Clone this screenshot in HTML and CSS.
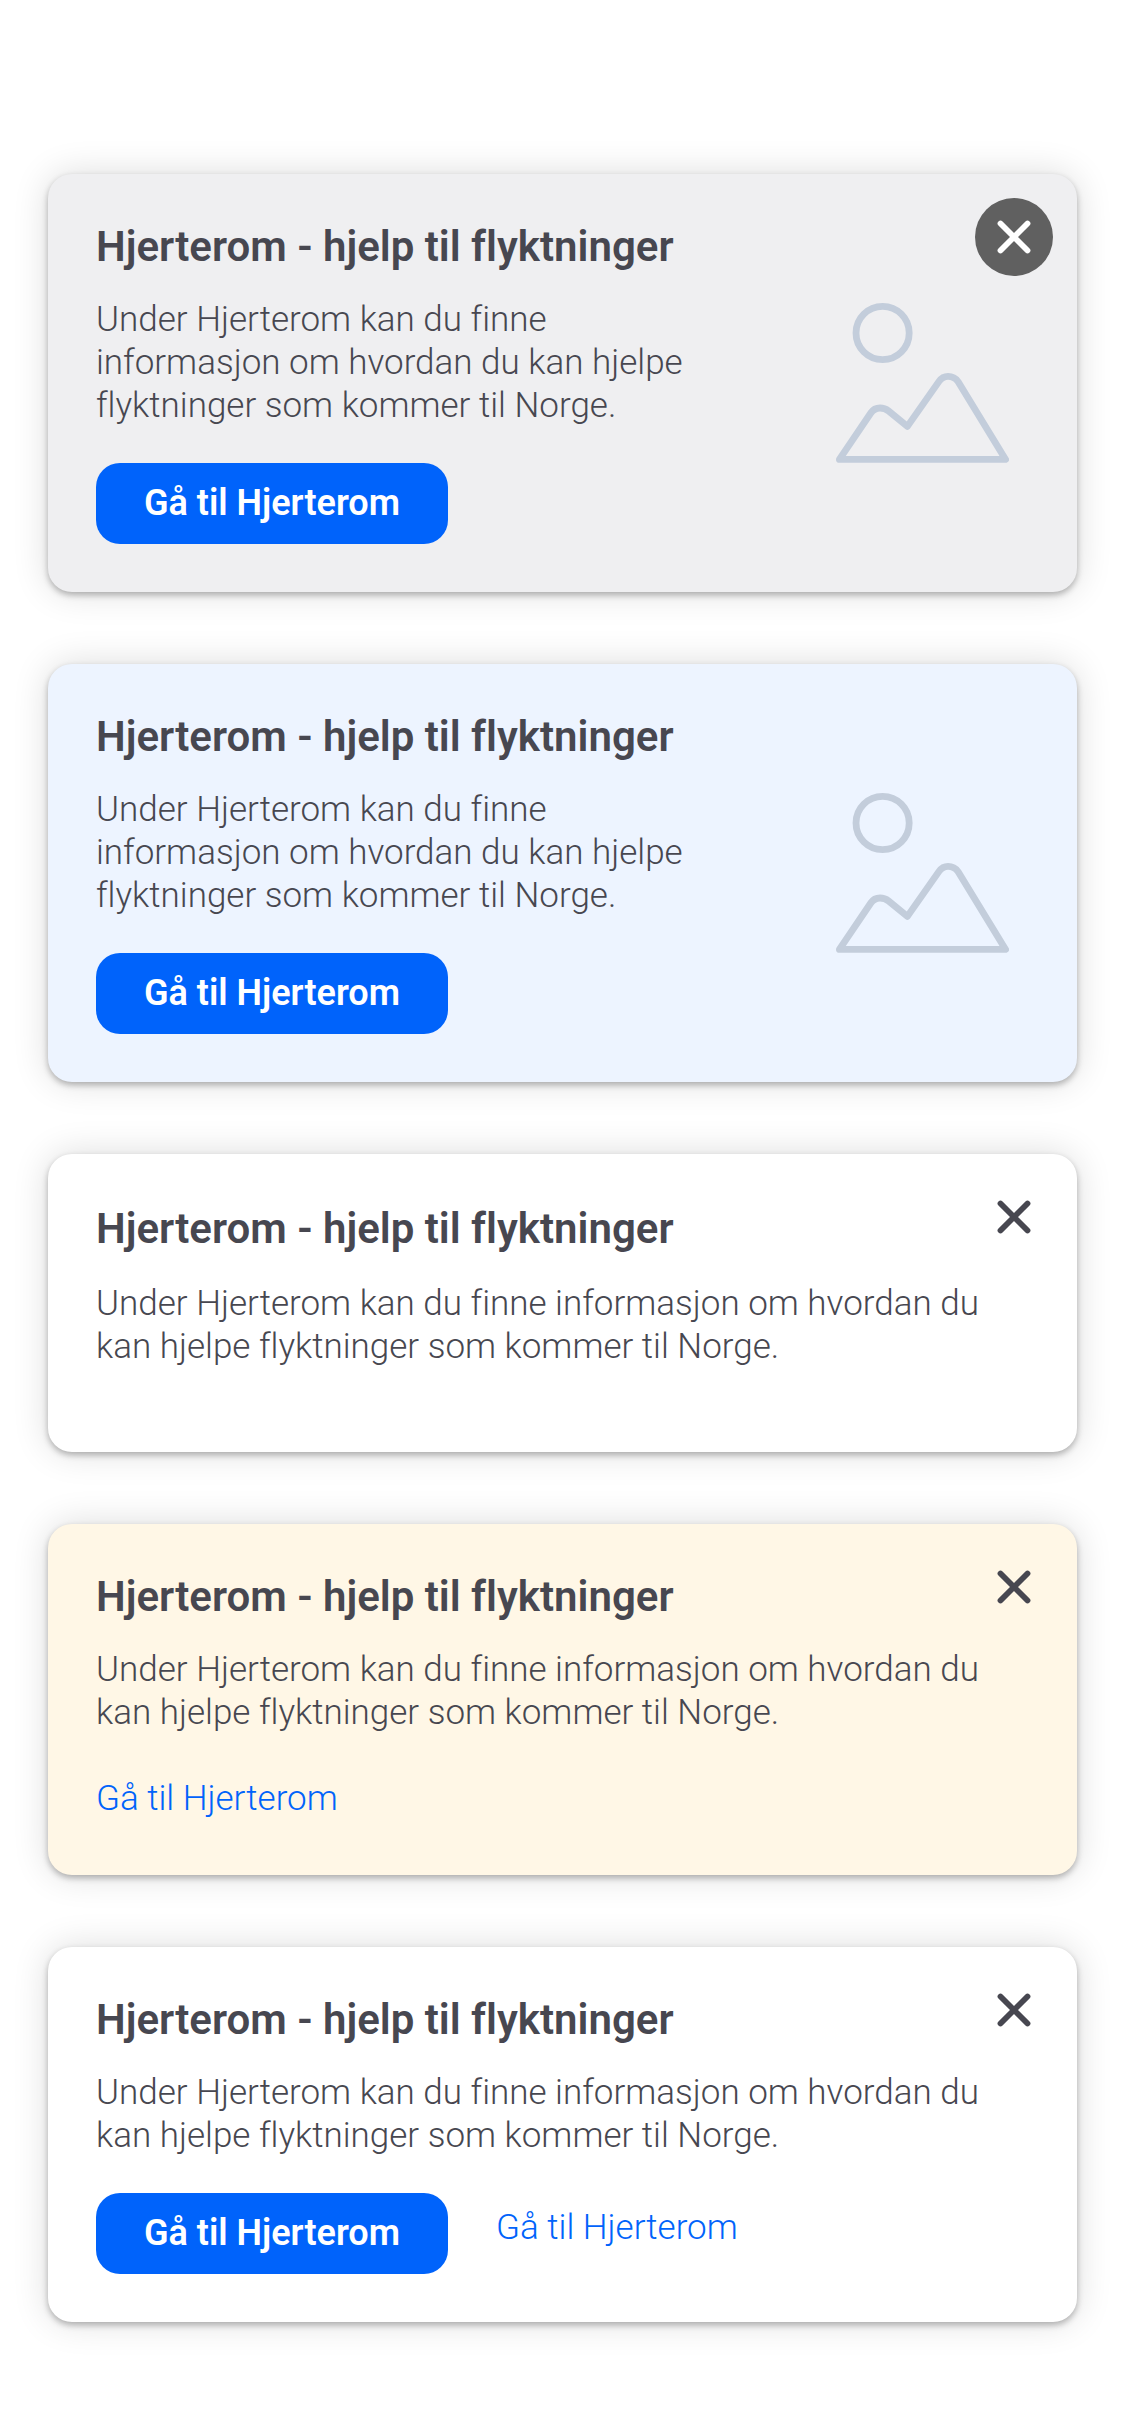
FILE: index.html
```html
<!DOCTYPE html>
<html lang="nb">
<head>
<meta charset="utf-8">
<meta name="viewport" content="width=device-width, initial-scale=1">
<title>Hjerterom</title>
<link rel="stylesheet" href="styles.css">
</head>
<body>
<svg class="sprite" aria-hidden="true">
  <symbol id="close" viewBox="0 0 34 34">
    <path d="M3.5 3.5 30.5 30.5M30.5 3.5 3.5 30.5" fill="none" stroke="currentColor" stroke-width="5.8" stroke-linecap="round"/>
  </symbol>
  <symbol id="picture" viewBox="0 0 173 160">
    <g fill="none" stroke="currentColor" stroke-width="6.8" stroke-linejoin="round">
      <circle cx="46.6" cy="30" r="26.6"/>
      <path d="M3.4 156.4 34.8 110Q38.2 105 44 105Q48.8 105 52.6 108L71.4 123.4 103 78.4Q106.6 73.4 112 73.4Q118.4 73.4 122 78.6L169.6 156.4Z"/>
    </g>
  </symbol>
</svg>
<main class="messages">
  <section class="card card-neutral">
    <div class="card-text">
      <h2 class="card-title">Hjerterom - hjelp til flyktninger</h2>
      <p class="card-body">Under Hjerterom kan du finne informasjon om hvordan du kan hjelpe flyktninger som kommer til Norge.</p>
      <div class="card-actions"><button class="button" type="button">Gå til Hjerterom</button></div>
    </div>
    <div class="card-media"><svg class="picture"><use href="#picture"/></svg></div>
    <button class="close close-filled" type="button" aria-label="Lukk"><svg class="close-icon"><use href="#close"/></svg></button>
  </section>

  <section class="card card-info">
    <div class="card-text">
      <h2 class="card-title">Hjerterom - hjelp til flyktninger</h2>
      <p class="card-body">Under Hjerterom kan du finne informasjon om hvordan du kan hjelpe flyktninger som kommer til Norge.</p>
      <div class="card-actions"><button class="button" type="button">Gå til Hjerterom</button></div>
    </div>
    <div class="card-media"><svg class="picture"><use href="#picture"/></svg></div>
  </section>

  <section class="card card-plain">
    <div class="card-text">
      <h2 class="card-title">Hjerterom - hjelp til flyktninger</h2>
      <p class="card-body">Under Hjerterom kan du finne informasjon om hvordan du kan hjelpe flyktninger som kommer til Norge.</p>
      <div class="card-actions"></div>
    </div>
    <button class="close" type="button" aria-label="Lukk"><svg class="close-icon"><use href="#close"/></svg></button>
  </section>

  <section class="card card-warning">
    <div class="card-text">
      <h2 class="card-title">Hjerterom - hjelp til flyktninger</h2>
      <p class="card-body">Under Hjerterom kan du finne informasjon om hvordan du kan hjelpe flyktninger som kommer til Norge.</p>
      <div class="card-actions"><a class="link" href="#">Gå til Hjerterom</a></div>
    </div>
    <button class="close" type="button" aria-label="Lukk"><svg class="close-icon"><use href="#close"/></svg></button>
  </section>

  <section class="card">
    <div class="card-text">
      <h2 class="card-title">Hjerterom - hjelp til flyktninger</h2>
      <p class="card-body">Under Hjerterom kan du finne informasjon om hvordan du kan hjelpe flyktninger som kommer til Norge.</p>
      <div class="card-actions"><button class="button" type="button">Gå til Hjerterom</button><a class="link" href="#">Gå til Hjerterom</a></div>
    </div>
    <button class="close" type="button" aria-label="Lukk"><svg class="close-icon"><use href="#close"/></svg></button>
  </section>
</main>
</body>
</html>
```
FILE: styles.css
```css
* {
  box-sizing: border-box;
}

body {
  margin: 0;
  background: #fff;
  color: #474750;
  font-family: Roboto, sans-serif;
  font-size: 35px;
  font-variant-ligatures: none;
  line-height: 43px;
}

.sprite {
  position: absolute;
  width: 0;
  height: 0;
}

.messages {
  display: flex;
  flex-direction: column;
  gap: 72px;
  padding: 174px 48px 114px;
}

.card {
  position: relative;
  display: flex;
  align-items: center;
  gap: 96px;
  padding: 48px;
  border-radius: 24px;
  background: #fff;
  box-shadow: 0 3px 6px rgba(0, 0, 0, 0.28), 0 0 36px rgba(0, 0, 0, 0.14);
}

.card-neutral {
  background: #efeff1;
}

.card-info {
  background: #edf4ff;
}

.card-warning {
  background: #fff7e6;
}

.card-text {
  flex: 1;
}

.card-title {
  margin: 0 0 26px;
  font-size: 42px;
  font-weight: 600;
  line-height: 50px;
}

.card-plain .card-title {
  line-height: 54px;
}

.card-body {
  margin: 0;
  font-weight: 300;
}

.card-actions {
  display: flex;
  align-items: flex-start;
  gap: 48px;
  margin-top: 36px;
}

.button {
  padding: 19px 48px;
  border: 0;
  border-radius: 24px;
  background: #0063fb;
  color: #fff;
  font: inherit;
  font-size: 36px;
  font-weight: 600;
}

.link {
  padding: 7px 0;
  color: #0063fb;
  font-weight: 300;
  text-decoration: none;
}

.button + .link {
  padding-top: 13px;
}

.card-media {
  display: flex;
  justify-content: center;
  width: 213px;
}

.picture {
  width: 173px;
  height: 160px;
  color: #c3cddb;
}

.close {
  position: absolute;
  top: 24px;
  right: 24px;
  display: flex;
  align-items: center;
  justify-content: center;
  width: 78px;
  height: 78px;
  padding: 0;
  border: 0;
  border-radius: 50%;
  background: none;
  color: #474750;
}

.close-filled {
  background: #606060;
  color: #fff;
}

.close-icon {
  width: 34px;
  height: 34px;
}
```
